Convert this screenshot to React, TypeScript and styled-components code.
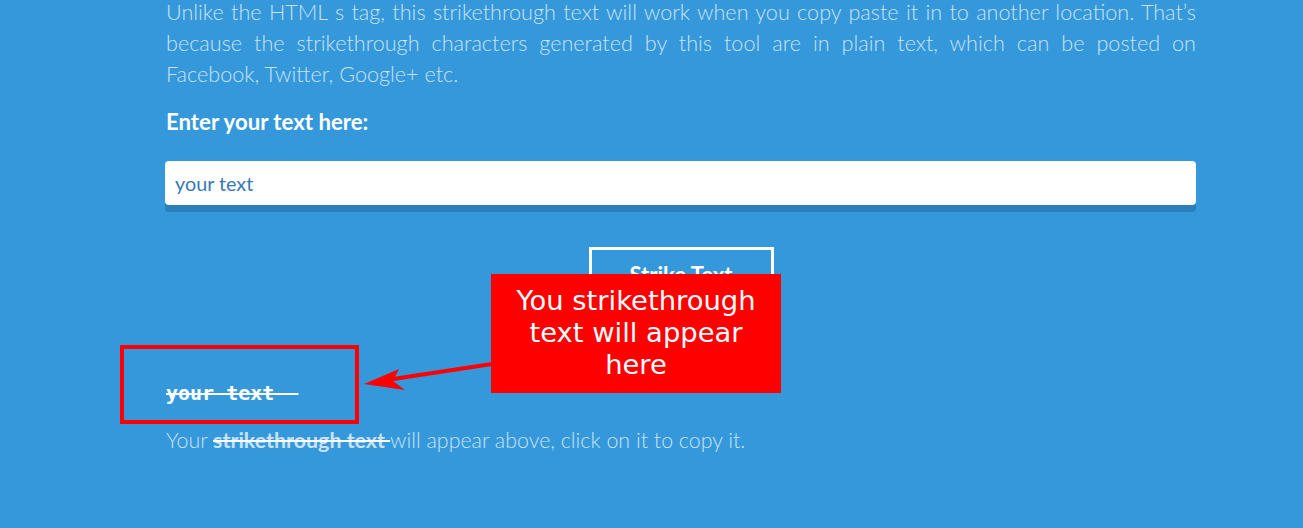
import React from "react";
import styled, { createGlobalStyle } from "styled-components";

const Global = createGlobalStyle`
  html, body { margin: 0; padding: 0; background: #3598db; overflow: hidden; }
  body { font-family: Lato, "Open Sans", sans-serif; }
`;

const Page = styled.div`
  position: relative;
  width: 1303px;
  height: 528px;
  background: #3598db;
  overflow: hidden;
`;

const Content = styled.div`
  width: 1030px;
  margin-left: 166px;
  margin-top: -3px;
  display: flex;
  flex-direction: column;
`;

const Intro = styled.p`
  margin: 0;
  font-size: 21.6px;
  line-height: 31px;
  font-weight: 300;
  color: #c9e2f5;
  text-align: justify;
`;

const Label = styled.h4`
  margin: 18px 0 0;
  font-size: 22.2px;
  line-height: 28px;
  font-weight: 700;
  color: #ffffff;
`;

const Field = styled.input`
  margin-top: 25px;
  margin-left: -1px;
  width: 1031px;
  height: 44px;
  box-sizing: border-box;
  border: none;
  border-radius: 4px;
  padding: 0 10px;
  background: #fff;
  box-shadow: 0 7px 0 #2a7fba;
  font-family: Lato, sans-serif;
  font-size: 19.8px;
  color: #3a78b4;
  outline: none;
  &::placeholder { color: #3a78b4; opacity: 1; }
`;

const ButtonRow = styled.div`
  display: flex;
  justify-content: center;
  margin-top: 42px;
`;

const StrikeButton = styled.button`
  width: 185px;
  height: 54px;
  background: transparent;
  border: 3px solid #fff;
  color: #fff;
  font-family: Lato, sans-serif;
  font-weight: 700;
  font-size: 22px;
`;

const Output = styled.div`
  margin-top: 78px;
  font-family: "DejaVu Sans Mono", monospace;
  font-weight: 700;
  font-size: 20px;
  line-height: 28px;
  color: #fff;
  white-space: pre;
  text-decoration: line-through;
  text-decoration-thickness: 2px;
`;

const Hint = styled.p`
  margin: 19px 0 0;
  font-size: 21.4px;
  line-height: 28px;
  font-weight: 300;
  color: #c9e2f5;
`;

const Struck = styled.span`
  font-weight: 700;
  color: #c9e2f5;
  text-decoration: line-through;
  text-decoration-color: #ffffff;
  text-decoration-thickness: 2px;
`;

const Callout = styled.div`
  position: absolute;
  left: 491px;
  top: 274px;
  width: 290px;
  height: 119px;
  background: #ff0000;
  color: #fff;
  font-family: Verdana, "DejaVu Sans", sans-serif;
  font-size: 27.4px;
  line-height: 32px;
  text-align: center;
  box-sizing: border-box;
  padding-top: 11px;
  white-space: nowrap;
`;

const Outline = styled.div`
  position: absolute;
  left: 120px;
  top: 345px;
  width: 239px;
  height: 79px;
  box-sizing: border-box;
  border: 4px solid #ff0000;
`;

const Arrow = styled.svg`
  position: absolute;
  left: 360px;
  top: 355px;
`;

export default function App() {
  return (
    <Page>
      <Global />
      <Content>
        <Intro>
          Unlike the HTML s tag, this strikethrough text will work when you copy paste it in to another location. That’s
          because the strikethrough characters generated by this tool are in plain text, which can be posted on
          Facebook, Twitter, Google+ etc.
        </Intro>
        <Label>Enter your text here:</Label>
        <Field placeholder="your text" />
        <ButtonRow>
          <StrikeButton>Strike Text</StrikeButton>
        </ButtonRow>
        <Output>{"your text  "}</Output>
        <Hint>
          Your <Struck>strikethrough text </Struck>will appear above, click on it to copy it.
        </Hint>
      </Content>
      <Outline />
      <Arrow width="140" height="40" viewBox="0 0 140 40">
        <line x1="132" y1="9" x2="20" y2="26" stroke="#ff0000" strokeWidth="4" />
        <polygon points="4,29 39,14 33,26 45,35" fill="#ff0000" />
      </Arrow>
      <Callout>
        You strikethrough
        <br />
        text will appear
        <br />
        here
      </Callout>
    </Page>
  );
}
